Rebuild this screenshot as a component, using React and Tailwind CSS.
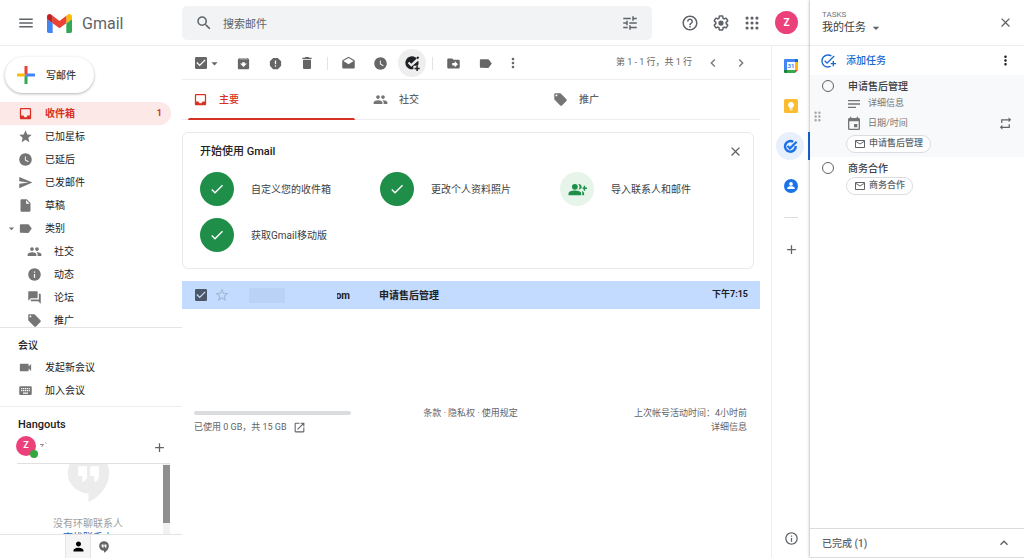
// src/App.jsx
import React from 'react';
import {
  MdAdd,
  MdAddTask,
  MdArchive,
  MdArrowDropDown,
  MdCheck,
  MdCheckBox,
  MdChevronLeft,
  MdChevronRight,
  MdClose,
  MdDelete,
  MdDragIndicator,
  MdDrafts,
  MdDriveFileMove,
  MdEvent,
  MdExpandLess,
  MdForum,
  MdHelpOutline,
  MdInbox,
  MdInfo,
  MdInfoOutline,
  MdInsertDriveFile,
  MdKeyboard,
  MdLabel,
  MdLocalOffer,
  MdMailOutline,
  MdMenu,
  MdMoreVert,
  MdNotes,
  MdOpenInNew,
  MdPeople,
  MdPerson,
  MdRepeat,
  MdReport,
  MdSearch,
  MdSend,
  MdStar,
  MdStarBorder,
  MdTune,
  MdVideocam,
  MdWatchLater,
} from 'react-icons/md';

const folders = [
  { label: '收件箱', icon: MdInbox, count: 1, active: true },
  { label: '已加星标', icon: MdStar },
  { label: '已延后', icon: MdWatchLater },
  { label: '已发邮件', icon: MdSend },
  { label: '草稿', icon: MdInsertDriveFile },
  { label: '类别', icon: MdLabel, open: true },
];

const categories = [
  { label: '社交', icon: MdPeople },
  { label: '动态', icon: MdInfo },
  { label: '论坛', icon: MdForum },
  { label: '推广', icon: MdLocalOffer },
];

const meetings = [
  { label: '发起新会议', icon: MdVideocam },
  { label: '加入会议', icon: MdKeyboard },
];

const tabs = [
  { label: '主要', icon: MdInbox, active: true },
  { label: '社交', icon: MdPeople },
  { label: '推广', icon: MdLocalOffer },
];

const steps = [
  { label: '自定义您的收件箱', done: true },
  { label: '更改个人资料照片', done: true },
  { label: '导入联系人和邮件', done: false },
  { label: '获取Gmail移动版', done: true },
];

const GmailLogo = () => (
  <svg viewBox="52 42 88 66" className="h-[19px] w-[25px]" aria-hidden="true">
    <path fill="#4285f4" d="M58 108h14V74L52 59v43c0 3.32 2.69 6 6 6" />
    <path fill="#34a853" d="M120 108h14c3.32 0 6-2.69 6-6V59l-20 15" />
    <path fill="#fbbc04" d="M120 48v26l20-15v-8c0-7.42-8.47-11.65-14.4-7.2" />
    <path fill="#ea4335" d="M72 74V48l24 18 24-18v26L96 92" />
    <path fill="#c5221f" d="M52 51v8l20 15V48l-5.6-4.2c-5.94-4.45-14.4-.22-14.4 7.2" />
  </svg>
);

const ColorPlus = () => (
  <svg viewBox="0 0 18 18" className="size-[18px]" aria-hidden="true">
    <path fill="#ea4335" d="M7.5 0h3v7.5l-3 3z" />
    <path fill="#fbbc04" d="M0 7.5h7.5v3H0z" />
    <path fill="#34a853" d="M7.5 10.5l3-1V18h-3z" />
    <path fill="#4285f4" d="M10.5 7.5H18v3H7.5z" />
  </svg>
);

const SettingsIcon = () => (
  <svg viewBox="0 0 24 24" className="size-[18px]" fill="currentColor" aria-hidden="true">
    <path d="M13.85 22.25h-3.7c-.74 0-1.36-.54-1.45-1.27l-.27-1.89c-.27-.14-.53-.29-.79-.46l-1.8.72c-.7.26-1.47-.03-1.81-.65L2.2 15.53c-.35-.66-.2-1.44.36-1.88l1.53-1.19c-.01-.15-.02-.3-.02-.46 0-.15.01-.31.02-.46l-1.52-1.19c-.59-.45-.74-1.26-.37-1.88l1.85-3.19c.34-.62 1.11-.9 1.79-.63l1.81.73c.26-.17.52-.32.78-.46l.27-1.91c.09-.7.71-1.25 1.44-1.25h3.7c.74 0 1.36.54 1.45 1.27l.27 1.89c.27.14.53.29.79.46l1.8-.72c.71-.26 1.48.03 1.82.65l1.84 3.18c.36.66.2 1.44-.36 1.88l-1.52 1.19c.01.15.02.3.02.46s-.01.31-.02.46l1.52 1.19c.56.45.72 1.23.37 1.86l-1.86 3.22c-.34.62-1.11.9-1.8.63l-1.8-.72c-.26.17-.52.32-.78.46l-.27 1.91c-.1.68-.72 1.22-1.46 1.22zm-3.23-2h2.76l.37-2.55.53-.22c.44-.18.88-.44 1.34-.78l.45-.34 2.38.96 1.38-2.4-2.03-1.58.07-.56c.03-.26.06-.51.06-.78s-.03-.53-.06-.78l-.07-.56 2.03-1.58-1.39-2.4-2.39.96-.45-.35c-.42-.32-.87-.58-1.33-.77l-.52-.22-.37-2.55h-2.76l-.37 2.55-.53.21c-.44.19-.88.44-1.34.79l-.45.33-2.38-.95-1.39 2.39 2.03 1.58-.07.56a7 7 0 0 0-.06.79c0 .26.02.53.06.78l.07.56-2.03 1.58 1.38 2.4 2.39-.96.45.35c.43.33.86.58 1.33.77l.53.22z" />
    <circle cx="12" cy="12" r="3.5" />
  </svg>
);

const AppsIcon = () => (
  <svg viewBox="0 0 24 24" className="size-[18px]" fill="currentColor" aria-hidden="true">
    {[5.4, 12, 18.6].map((y) => [5.4, 12, 18.6].map((x) => <circle key={`${x}-${y}`} cx={x} cy={y} r="2.1" />))}
  </svg>
);

const HangoutsIcon = ({ className }) => (
  <svg viewBox="0 0 24 28" className={className} aria-hidden="true">
    <path fill="currentColor" d="M12 0a11.6 11.6 0 0 0 0 23.2V28c7-3.4 11.6-9.5 11.6-16.4A11.6 11.6 0 0 0 12 0z" />
    <path fill="#fff" d="M6.2 8h5v5.2c0 2-1 3.2-2.6 3.6v-3.4H6.2zM12.9 8h5v5.2c0 2-1 3.2-2.6 3.6v-3.4h-2.4z" />
  </svg>
);

const AddTaskSolidIcon = () => (
  <svg viewBox="0 0 24 24" className="size-4" fill="currentColor" aria-hidden="true">
    <path d="M16.8 3.3A9.8 9.8 0 1 0 14 21.3V16h6.9a9.8 9.8 0 0 0 .4-7.3L10.900 17.500 5.700 12.300l2.100-2.100 3.100 3.100 8.200-8.200a10 10 0 0 0-2.300-1.800z" />
    <path d="M20.8 2l2 2-2.300 2.300-2-2zM18.500 16.500h2.300v2.700h2.700v2.300h-2.700v2.700h-2.300v-2.700h-2.700v-2.300h2.700z" />
  </svg>
);

const CalendarIcon = () => (
  <svg viewBox="0 0 28 28" className="size-[14px]" aria-hidden="true">
    <path fill="#4285f4" d="M2 0h20v6H6v16H0V2a2 2 0 0 1 2-2z" />
    <path fill="#1967d2" d="M22 0h4a2 2 0 0 1 2 2v4h-6z" />
    <path fill="#fbbc04" d="M22 6h6v16h-6z" />
    <path fill="#34a853" d="M6 22h16v6H6z" />
    <path fill="#188038" d="M0 22h6v6H2a2 2 0 0 1-2-2z" />
    <path fill="#ea4335" d="M22 22h6l-6 6z" />
    <path fill="#fff" d="M6 6h16v16H6z" />
    <text x="14" y="18" textAnchor="middle" fontSize="12" fontWeight="700" fill="#4285f4">31</text>
  </svg>
);

const KeepIcon = () => (
  <svg viewBox="0 0 28 28" className="size-[14px]" aria-hidden="true">
    <rect width="28" height="28" rx="3" fill="#fbbc2f" />
    <path fill="#fff" d="M14 6a6 6 0 0 0-3 11.2V19h6v-1.8A6 6 0 0 0 14 6zM11 20.5h6v2h-6z" />
  </svg>
);

const TasksIcon = () => (
  <svg viewBox="0 0 28 28" className="size-[15px]" fill="none" aria-hidden="true">
    <path stroke="#1a73e8" strokeWidth="4.5" d="M19 5.2A10 10 0 1 0 23.7 13" />
    <path stroke="#1a73e8" strokeWidth="4" d="M8.5 13l4.5 4.5L25.5 5" />
  </svg>
);

const ContactsIcon = () => (
  <svg viewBox="0 0 28 28" className="size-[14px]" aria-hidden="true">
    <circle cx="14" cy="14" r="14" fill="#1a73e8" />
    <circle cx="14" cy="9.8" r="3.7" fill="#fff" />
    <path fill="#fff" d="M6.5 20v-1.5c0-2.8 4.2-4 7.5-4s7.5 1.2 7.5 4V20z" />
  </svg>
);

const AddContactIcon = () => (
  <svg viewBox="0 0 36 24" className="h-[13px] w-[19px]" fill="#1e8e49" aria-hidden="true">
    <circle cx="13" cy="7" r="5.5" />
    <path d="M1 23v-3.5C1 15.5 8 14 13 14s12 1.5 12 5.5V23z" />
    <path d="M19.5 1.5c4.8.4 6.5 3 6.5 5.5s-1.7 5.1-6.5 5.5c3.2-3.4 3.2-7.6 0-11zM26 15c3 1 4.5 2.5 4.5 4.5V23H27v-3.5c0-1.8-.2-3-1-4.5z" />
    <path d="M29.8 5h2.7v3.3H36V11h-3.5v3.3h-2.7V11h-2.3V8.3h2.3z" />
  </svg>
);

const RoundAvatar = ({ className }) => (
  <span className={`grid place-items-center rounded-full bg-[#ec407a] font-bold text-white ${className}`}>Z</span>
);

const IconButton = ({ label, className = '', children }) => (
  <button type="button" aria-label={label} className={`grid h-7 shrink-0 place-items-center ${className}`}>
    {children}
  </button>
);

const CheckedBox = ({ label, className = '' }) => (
  <label className="grid size-4 shrink-0">
    <input type="checkbox" defaultChecked aria-label={label} className="col-start-1 row-start-1 size-4 appearance-none" />
    <MdCheckBox className={`pointer-events-none col-start-1 row-start-1 size-4 ${className}`} />
  </label>
);

const Header = () => (
  <header className="flex h-[46px] shrink-0 items-center border-b border-[#eeeeee]">
    <div className="flex w-[182px] shrink-0 items-center pl-[17px] text-[#5f6368]">
      <IconButton label="主菜单"><MdMenu className="size-[18px]" /></IconButton>
      <a href="#inbox" className="ml-3 flex items-center gap-[10px] pt-[2px] text-base leading-5">
        <GmailLogo />
        Gmail
      </a>
    </div>
    <form className="flex h-[34px] w-[470px] min-w-0 items-center rounded-[5px] bg-[#f1f3f4] px-[13px] text-[#5f6368]">
      <IconButton label="搜索"><MdSearch className="size-[18px]" /></IconButton>
      <input
        type="text"
        aria-label="搜索邮件"
        placeholder="搜索邮件"
        className="ml-[10px] h-[34px] min-w-0 flex-1 bg-transparent pt-[3px] text-[11px] outline-none placeholder:text-[#5f6368]"
      />
      <IconButton label="搜索选项"><MdTune className="size-[18px]" /></IconButton>
    </form>
    <div className="ml-auto flex items-center pr-3 text-[#5f6368]">
      <IconButton label="支持" className="w-[31px]"><MdHelpOutline className="size-[18px]" /></IconButton>
      <IconButton label="设置" className="w-[31px]"><SettingsIcon /></IconButton>
      <IconButton label="应用" className="w-[31px]"><AppsIcon /></IconButton>
      <IconButton label="帐号" className="ml-2"><RoundAvatar className="size-[23px] text-[10px]" /></IconButton>
    </div>
  </header>
);

const NavItem = ({ item, nested }) => {
  const Icon = item.icon;
  return (
    <li>
      <a
        href={`#${item.label}`}
        className={`mr-[11px] flex h-[23px] items-center rounded-r-full pr-[9px] ${
          item.active ? 'bg-[#fce8e6] font-bold text-[#d93025]' : 'text-[#202124]'
        } ${nested ? 'pl-[27px]' : 'pl-[5px]'}`}
      >
        {!nested && (
          <span className="w-[13px]">{item.open && <MdArrowDropDown className="size-[13px] text-[#757575]" />}</span>
        )}
        <Icon className={`size-[15px] shrink-0 ${item.active ? 'text-[#d93025]' : 'text-[#757575]'}`} />
        <span className="ml-3 flex-1">{item.label}</span>
        {item.count && <span className="text-[9px]">{item.count}</span>}
      </a>
    </li>
  );
};

const Sidebar = () => (
  <aside className="flex w-[182px] shrink-0 flex-col text-[10px]">
    <button
      type="button"
      className="mt-[11px] ml-[5px] flex h-[36px] shrink-0 items-center gap-[11px] self-start rounded-full pr-[18px] pl-3 font-medium text-[#3c4043] shadow-[0_1px_3px_#0000004d]"
    >
      <ColorPlus />
      写邮件
    </button>
    <nav className="mt-[9px] min-h-0 flex-1 overflow-hidden">
      <ul>
        {folders.map((item) => (
          <NavItem key={item.label} item={item} />
        ))}
        {categories.map((item) => (
          <NavItem key={item.label} item={item} nested />
        ))}
      </ul>
    </nav>
    <section className="border-t border-[#e4e4e4] pt-[7px] pb-1">
      <h2 className="pl-[18px] leading-[21px] font-medium text-[#202124]">会议</h2>
      <ul>
        {meetings.map((item) => (
          <NavItem key={item.label} item={item} />
        ))}
      </ul>
    </section>
    <section className="border-t border-[#eeeeee] pt-2">
      <h2 className="pl-[18px] text-[11px] leading-5 font-medium text-[#202124]">Hangouts</h2>
      <div className="mr-[15px] ml-4 flex h-[28px] items-start pt-px">
        <div className="relative">
          <RoundAvatar className="size-5 text-[9px]" />
          <span className="absolute -right-[2px] -bottom-[2px] size-2 rounded-full bg-[#34a83f]" />
        </div>
        <svg viewBox="0 0 8 8" className="mt-1.5 ml-1 size-2" aria-hidden="true">
          <path stroke="#8a8a8a" fill="none" d="M0 2.5h3.5L1.5 5M5.5.8l1 .5" />
        </svg>
        <button type="button" aria-label="新对话" className="mt-1 ml-auto">
          <MdAdd className="size-[15px] text-[#5f6368]" />
        </button>
      </div>
      <div className="mr-3 ml-[17px] flex h-[71px] border-t border-[#e0e0e0]">
        <div className="flex flex-1 flex-col items-center overflow-hidden pr-1">
          <HangoutsIcon className="-mt-3 h-[50px] w-[43px] shrink-0 text-[#ececec]" />
          <p className="mt-[14px] leading-4 whitespace-nowrap text-[#9e9e9e]">没有环聊联系人</p>
          <a href="#find" className="leading-3 whitespace-nowrap text-[#1565c0]">查找联系人</a>
        </div>
        <div className="w-[7px] bg-[#f1f1f1]">
          <div className="mt-px h-[58px] bg-[#8f8f8f]" />
        </div>
      </div>
    </section>
    <div className="flex h-6 shrink-0 border-t border-[#e4e4e4] pl-[65px]">
      <button type="button" aria-label="联系人" className="grid w-[26px] place-items-center border-x border-[#e4e4e4] bg-[#f5f5f5]">
        <MdPerson className="size-[15px] text-black" />
      </button>
      <button type="button" aria-label="环聊" className="grid w-[26px] place-items-center text-[#666666]">
        <HangoutsIcon className="h-3 w-[10px]" />
      </button>
    </div>
  </aside>
);

const Toolbar = () => (
  <div className="flex h-[34px] shrink-0 items-center border-b border-[#eeeeee] pt-px pr-[19px] pl-[11px] text-[#666666]">
    <CheckedBox label="选择" className="text-[#666666]" />
    <IconButton label="选择选项" className="mr-[5px] -ml-[2px]"><MdArrowDropDown className="size-[15px]" /></IconButton>
    <IconButton label="归档" className="w-8"><MdArchive className="size-[15px]" /></IconButton>
    <IconButton label="举报垃圾邮件" className="w-8"><MdReport className="size-[15px]" /></IconButton>
    <IconButton label="删除" className="w-8"><MdDelete className="size-4" /></IconButton>
    <span className="mx-1 h-[13px] w-px shrink-0 bg-[#e4e4e4]" />
    <IconButton label="标记为未读" className="w-8"><MdDrafts className="size-[15px]" /></IconButton>
    <IconButton label="延后" className="w-8"><MdWatchLater className="size-[15px]" /></IconButton>
    <IconButton label="添加到任务列表" className="mx-[2px] w-7 rounded-full bg-[#eeeeee] text-[#202124]">
      <AddTaskSolidIcon />
    </IconButton>
    <span className="mx-1 h-[13px] w-px shrink-0 bg-[#e4e4e4]" />
    <IconButton label="移至" className="w-8"><MdDriveFileMove className="size-[15px]" /></IconButton>
    <IconButton label="标签" className="w-8"><MdLabel className="size-[15px]" /></IconButton>
    <IconButton label="更多" className="w-6"><MdMoreVert className="size-4" /></IconButton>
    <span className="ml-auto text-[9px] whitespace-nowrap">第 1 - 1 行，共 1 行</span>
    <IconButton label="较新" className="ml-[5px] w-8"><MdChevronLeft className="size-4 text-[#757575]" /></IconButton>
    <IconButton label="较旧" className="w-[23px]"><MdChevronRight className="size-4 text-[#757575]" /></IconButton>
  </div>
);

const Tabs = () => (
  <div role="tablist" className="mr-[11px] flex h-10 shrink-0 border-b border-[#eeeeee]">
    {tabs.map(({ label, icon: Icon, active }) => (
      <button
        key={label}
        type="button"
        role="tab"
        aria-selected={!!active}
        className={`flex w-[180px] flex-col text-left text-[10px] font-medium ${active ? 'text-[#d93025]' : 'text-[#5f6368]'}`}
      >
        <span className="flex flex-1 items-center gap-[11px] pt-px pl-[11px]">
          <Icon className={`size-[15px] ${active ? '' : 'text-[#757575]'}`} />
          {label}
        </span>
        <span className={`-mb-px ml-[6px] h-[2px] w-[167px] rounded-t-full ${active ? 'bg-[#d93025]' : ''}`} />
      </button>
    ))}
  </div>
);

const SetupCard = () => (
  <section className="mt-3 mr-[17px] rounded-md border border-[#eaeaea] pb-4 pl-[17px]">
    <div className="flex h-[37px] items-center justify-between pr-[10px]">
      <h2 className="pt-[2px] text-[11px] font-medium text-[#202124]">开始使用 Gmail</h2>
      <IconButton label="关闭"><MdClose className="size-[15px] text-[#5f6368]" /></IconButton>
    </div>
    <ul className="flex flex-wrap gap-y-3 pt-[2px]">
      {steps.map((step) => (
        <li key={step.label} className="flex w-[180px] items-center gap-[17px] text-[10px] text-[#3c4043]">
          <span className={`grid size-[34px] place-items-center rounded-full ${step.done ? 'bg-[#1e8e49]' : 'bg-[#e6f4ea]'}`}>
            {step.done ? <MdCheck className="size-4 text-white" /> : <AddContactIcon />}
          </span>
          {step.label}
        </li>
      ))}
    </ul>
  </section>
);

const MailList = () => (
  <div className="mt-3 mr-[11px]">
    <table className="w-full table-fixed text-[10px] text-[#202124]">
      <tbody>
        <tr className="h-7 bg-[#c2dbff] font-bold">
          <td className="w-[30px] pl-[11px]"><CheckedBox label="选择邮件" className="text-[#4b5666]" /></td>
          <td className="w-[37px]">
            <button type="button" aria-label="加星标" className="ml-[2px] block"><MdStarBorder className="size-4 text-[#a3b6d1]" /></button>
          </td>
          <td className="w-[130px]">
            <span className="flex items-center">
              <span className="h-[15px] w-9 bg-[#bad2f5]" />
              <span className="ml-[52px] flex w-[13px] justify-end overflow-hidden">om</span>
            </span>
          </td>
          <td>申请售后管理</td>
          <td className="w-[60px] pr-3 text-right text-[9px] whitespace-nowrap">下午7:15</td>
        </tr>
      </tbody>
    </table>
  </div>
);

const MailFooter = () => (
  <footer className="mt-[97px] mr-[24px] ml-3 grid grid-cols-3 text-[9px] leading-[14px] text-[#5f6368]">
    <div className="w-[157px]">
      <div className="mt-[5px] h-1 rounded-full bg-[#dadce0]" />
      <p className="mt-[5px] flex items-center gap-[6px] whitespace-nowrap">
        已使用 0 GB，共 15 GB
        <a href="#storage" aria-label="管理存储空间"><MdOpenInNew className="size-[13px]" /></a>
      </p>
    </div>
    <p className="text-center">条款 · 隐私权 · 使用规定</p>
    <p className="text-right">
      上次帐号活动时间：4小时前
      <br />
      <a href="#activity">详细信息</a>
    </p>
  </footer>
);

const AppRail = () => (
  <aside className="flex w-[39px] shrink-0 flex-col items-center border-l border-[#eeeeee] pt-[6px] pb-[6px]">
    <IconButton label="日历" className="w-7"><CalendarIcon /></IconButton>
    <IconButton label="记事" className="mt-3 w-7"><KeepIcon /></IconButton>
    <div className="mt-3 flex w-full justify-center border-r-2 border-[#1967d2]">
      <IconButton label="任务" className="w-7 rounded-full bg-[#e8f0fe]"><TasksIcon /></IconButton>
    </div>
    <IconButton label="通讯录" className="mt-3 w-7"><ContactsIcon /></IconButton>
    <hr className="mt-[17px] w-[14px] border-[#dadce0]" />
    <IconButton label="获取插件" className="mt-[17px] w-7"><MdAdd className="size-[15px] text-[#5f6368]" /></IconButton>
    <IconButton label="信息" className="mt-auto w-7"><MdInfoOutline className="size-[15px] text-[#5f6368]" /></IconButton>
  </aside>
);

const MailChip = ({ label }) => (
  <a href="#mail" className="flex h-[18px] items-center gap-[3px] self-start rounded-full border border-[#dadce0] bg-white px-[7px] text-[9px] font-medium text-[#5f6368]">
    <MdMailOutline className="size-3" />
    {label}
  </a>
);

const TaskPanel = () => (
  <aside className="z-10 flex w-[214px] shrink-0 flex-col bg-white text-[10px] text-[#3c4043] shadow-[0_0_3px_#00000066]">
    <div className="flex h-[46px] shrink-0 items-center justify-between border-b border-[#eeeeee] pr-[11px] pl-3">
      <div className="pt-px">
        <div className="text-[8px] leading-[10px] text-[#757575]">TASKS</div>
        <label className="flex items-center text-[11px] leading-4 text-[#3c4043]">
          <select aria-label="任务列表" className="field-sizing-content appearance-none bg-transparent outline-none">
            <option>我的任务</option>
          </select>
          <MdArrowDropDown className="ml-[2px] size-4 text-[#5f6368]" />
        </label>
      </div>
      <IconButton label="关闭"><MdClose className="size-[15px] text-[#5f6368]" /></IconButton>
    </div>
    <div className="flex h-[29px] shrink-0 items-center justify-between pr-[11px] pl-[10px]">
      <button type="button" className="flex items-center gap-[10px] font-medium text-[#1967d2]">
        <MdAddTask className="size-4" />
        添加任务
      </button>
      <IconButton label="更多选项"><MdMoreVert className="size-[15px] text-[#202124]" /></IconButton>
    </div>
    <ul>
      <li className="flex h-[82px] bg-[#f8f9fa] pr-[11px]">
        <MdDragIndicator className="size-[15px] shrink-0 self-center text-[#a8abae]" />
        <input type="checkbox" aria-label="完成申请售后管理" className="mt-[5px] -ml-[3px] size-3 shrink-0 appearance-none rounded-full border border-[#5f6368]" />
        <div className="ml-3 flex flex-1 flex-col">
          <span className="mt-[3px] pl-[2px] leading-[18px] font-medium">申请售后管理</span>
          <span className="flex h-4 items-center gap-[6px] text-[9px] text-[#757575]">
            <MdNotes className="size-4" />
            详细信息
          </span>
          <span className="flex h-[23px] items-center gap-[6px] text-[9px] text-[#757575]">
            <MdEvent className="size-4" />
            日期/时间
            <button type="button" aria-label="重复" className="ml-auto"><MdRepeat className="size-[15px] text-[#5f6368]" /></button>
          </span>
          <MailChip label="申请售后管理" />
        </div>
      </li>
      <li className="flex pr-[11px] pl-3">
        <input type="checkbox" aria-label="完成商务合作" className="mt-[5px] size-3 shrink-0 appearance-none rounded-full border border-[#5f6368]" />
        <div className="ml-3 flex flex-1 flex-col">
          <span className="mt-[3px] pl-[2px] leading-[17px] font-medium">商务合作</span>
          <MailChip label="商务合作" />
        </div>
      </li>
    </ul>
    <button type="button" className="mt-auto flex h-[30px] shrink-0 items-center justify-between border-y border-[#dadce0] pr-3 pl-3 font-medium text-[#5f6368]">
      已完成 (1)
      <MdExpandLess className="size-4" />
    </button>
  </aside>
);

const App = () => {
  return (
    <div className="flex h-screen overflow-hidden bg-white font-[Roboto,'Noto_Sans_CJK_SC',sans-serif]">
      <div className="flex min-w-0 flex-1 flex-col">
        <Header />
        <div className="flex min-h-0 flex-1">
          <Sidebar />
          <main className="flex min-w-0 flex-1 flex-col">
            <Toolbar />
            <Tabs />
            <SetupCard />
            <MailList />
            <MailFooter />
          </main>
          <AppRail />
        </div>
      </div>
      <TaskPanel />
    </div>
  );
};

export default App;
